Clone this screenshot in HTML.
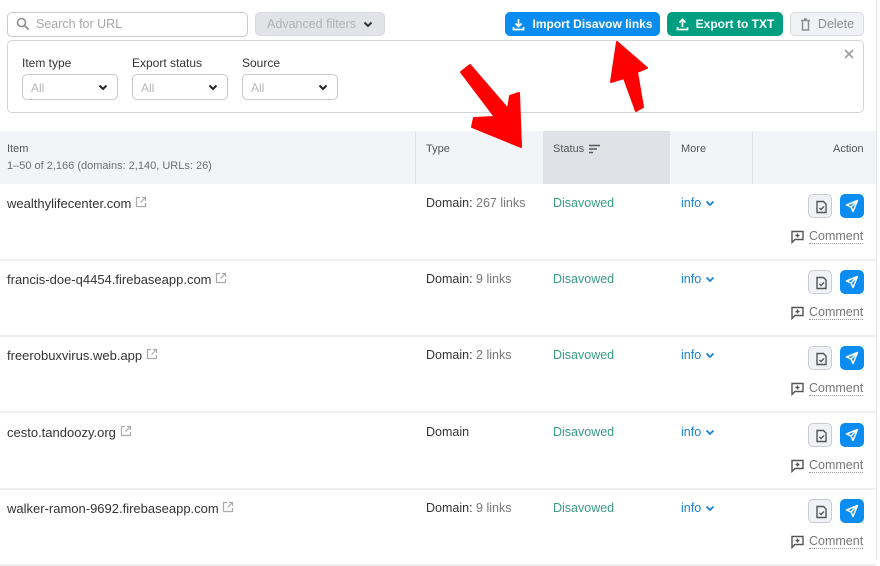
<!DOCTYPE html>
<html><head><meta charset="utf-8"><style>
*{box-sizing:border-box;margin:0;padding:0}
body{width:880px;height:560px;overflow:hidden;background:#fff;font-family:"Liberation Sans",sans-serif;color:#333;position:relative}
.a{position:absolute;white-space:nowrap}
.btn{position:absolute;height:24px;border-radius:5px;font-size:12.5px;display:flex;align-items:center;justify-content:center;gap:7px}
.sel{position:absolute;top:74px;width:96px;height:26px;border:1px solid #c8c9ce;border-radius:5px;font-size:12px;color:#b4b6bb;padding:6px 0 0 8px}
.sel svg{position:absolute;right:9px;top:9px}
.lbl{position:absolute;top:56px;font-size:12px;color:#333}
.row{position:absolute;left:0;width:876px;border-bottom:2px solid #efeff1;height:77px}
.c{position:absolute;top:12px;font-size:12.5px}
.it{font-size:13px}
.ic1{position:absolute;width:24px;height:24px;border:1px solid #c9cbd0;background:#f1f2f5;border-radius:5px}
.ic2{position:absolute;width:24px;height:24px;background:#0a8cf0;border-radius:5px}
.ic1 svg,.ic2 svg{position:absolute;left:5px;top:5px}
.cm{position:absolute;top:46px;left:791px;font-size:12.5px;color:#777;display:flex;align-items:center;gap:4px}
.cm span{border-bottom:1px dotted #999;line-height:13px}
</style></head><body>
<div class="a" style="left:7px;top:12px;width:241px;height:25px;border:1px solid #c8c9ce;border-radius:5px"></div>
<svg class="a" style="left:16px;top:17px" width="14" height="14" viewBox="0 0 14 14"><circle cx="5.5" cy="5.5" r="4" fill="none" stroke="#8a8d93" stroke-width="1.6"/><path d="M8.5 8.5L12.5 12.5" stroke="#8a8d93" stroke-width="1.8"/></svg>
<div class="a" style="left:36px;top:17px;font-size:12.5px;color:#a5a7ad">Search for URL</div>
<div class="btn" style="left:255px;top:12px;width:130px;background:#e2e3e7;color:#b0b2b8;border:1px solid #d8d9dd">Advanced filters <svg width="10" height="7" viewBox="0 0 10 7"><path d="M1.5 1.5L5 5L8.5 1.5" fill="none" stroke="#333" stroke-width="2"/></svg></div>
<div class="btn" style="left:505px;top:12px;width:155px;background:#0a8cf0;color:#fff;font-weight:bold;font-size:12px"><svg width="13" height="13" viewBox="0 0 13 13"><path d="M6.5 1V8M3.5 5.5L6.5 8.5L9.5 5.5M1.5 9V11.5H11.5V9" fill="none" stroke="#fff" stroke-width="1.7"/></svg>Import Disavow links</div>
<div class="btn" style="left:667px;top:12px;width:116px;background:#009f81;color:#fff;font-weight:bold;font-size:12px"><svg width="13" height="13" viewBox="0 0 13 13"><path d="M6.5 9V2M3.5 4.5L6.5 1.5L9.5 4.5M1.5 9V11.5H11.5V9" fill="none" stroke="#fff" stroke-width="1.7"/></svg>Export to TXT</div>
<div class="btn" style="left:790px;top:12px;width:74px;background:#f1f2f5;color:#8a8d93;border:1px solid #d8d9dd"><svg width="11" height="13" viewBox="0 0 11 13"><path d="M1 2.5H10M4 1H7M2.5 2.5V12H8.5V2.5" fill="none" stroke="#8a8d93" stroke-width="1.5"/></svg>Delete</div>
<div class="a" style="left:7px;top:40px;width:857px;height:73px;border:1px solid #d3d4d8;border-radius:5px"></div>
<svg class="a" style="left:844px;top:49px" width="10" height="10" viewBox="0 0 10 10"><path d="M1 1L9 9M9 1L1 9" stroke="#9a9ca2" stroke-width="1.6"/></svg>
<div class="lbl" style="left:22px">Item type</div>
<div class="lbl" style="left:132px">Export status</div>
<div class="lbl" style="left:242px">Source</div>
<div class="sel" style="left:22px">All<svg width="10" height="7" viewBox="0 0 10 7"><path d="M1.5 1.5L5 5L8.5 1.5" fill="none" stroke="#222" stroke-width="2"/></svg></div>
<div class="sel" style="left:132px">All<svg width="10" height="7" viewBox="0 0 10 7"><path d="M1.5 1.5L5 5L8.5 1.5" fill="none" stroke="#222" stroke-width="2"/></svg></div>
<div class="sel" style="left:242px">All<svg width="10" height="7" viewBox="0 0 10 7"><path d="M1.5 1.5L5 5L8.5 1.5" fill="none" stroke="#222" stroke-width="2"/></svg></div>
<div class="a" style="left:0;top:131px;width:876px;height:53px;background:#f3f4f7"></div>
<div class="a" style="left:543px;top:131px;width:127px;height:53px;background:#e1e2e8"></div>
<div class="a" style="left:415px;top:131px;width:1px;height:53px;background:#e1e2e6"></div>
<div class="a" style="left:752px;top:131px;width:1px;height:53px;background:#e1e2e6"></div>
<div class="a" style="left:876px;top:0;width:1px;height:560px;background:#e4e5e8"></div>
<div class="a" style="left:7px;top:143px;font-size:11px;color:#555">Item</div>
<div class="a" style="left:7px;top:160px;font-size:11px;color:#6c6e74">1–50 of 2,166 (domains: 2,140, URLs: 26)</div>
<div class="a" style="left:426px;top:143px;font-size:11px;color:#555">Type</div>
<div class="a" style="left:553px;top:143px;font-size:11px;color:#555">Status</div>
<svg class="a" style="left:589px;top:144px" width="12" height="10" viewBox="0 0 12 10"><path d="M0 1.5H11M0 5H8M0 8.5H4" stroke="#555" stroke-width="1.4"/></svg>
<div class="a" style="left:681px;top:143px;font-size:11px;color:#555">More</div>
<div class="a" style="left:833px;top:143px;font-size:11px;color:#555">Action</div>

<svg width="0" height="0" style="position:absolute"><defs>
<g id="ext"><path d="M5 1.5H1.5V10.5H10.5V7M7 1.5H10.5V5M10.5 1.5L5.5 6.5" fill="none" stroke="#aaa" stroke-width="1.2"/></g>
<g id="chev"><path d="M1.5 1.5L5 5L8.5 1.5" fill="none" stroke="#1a82d6" stroke-width="1.8"/></g>
<g id="doc"><path d="M3 1.5H9.5L12 4V12.5H3Z" fill="none" stroke="#555" stroke-width="1.4"/><path d="M5.5 8L7 9.5L10 6.5" fill="none" stroke="#555" stroke-width="1.4"/></g>
<g id="send"><path d="M12.5 1.5L1.5 6L6 8L8 12.5Z M6 8L12.5 1.5" fill="none" stroke="#fff" stroke-width="1.5" stroke-linejoin="round"/></g>
<g id="cmt"><path d="M1 1.5H12V9.5H4L1 12.5Z" fill="none" stroke="#555" stroke-width="1.4"/><path d="M6.5 3.5V7.5M4.5 5.5H8.5" stroke="#555" stroke-width="1.4"/></g>
</defs></svg>

<div class="row" style="top:184px"><div class="c it" style="left:7px">wealthylifecenter.com <svg width="12" height="12"><use href="#ext"/></svg></div><div class="c" style="left:426px">Domain: <span style="color:#777">267 links</span></div><div class="c" style="left:553px;color:#3a9a83">Disavowed</div><div class="c" style="left:681px;color:#1a82d6">info <svg width="10" height="7"><use href="#chev"/></svg></div><div class="ic1" style="left:808px;top:10px"><svg width="14" height="14"><use href="#doc"/></svg></div><div class="ic2" style="left:840px;top:10px"><svg width="14" height="14"><use href="#send"/></svg></div><div class="cm"><svg width="14" height="14"><use href="#cmt"/></svg><span>Comment</span></div></div>
<div class="row" style="top:260px"><div class="c it" style="left:7px">francis-doe-q4454.firebaseapp.com <svg width="12" height="12"><use href="#ext"/></svg></div><div class="c" style="left:426px">Domain: <span style="color:#777">9 links</span></div><div class="c" style="left:553px;color:#3a9a83">Disavowed</div><div class="c" style="left:681px;color:#1a82d6">info <svg width="10" height="7"><use href="#chev"/></svg></div><div class="ic1" style="left:808px;top:10px"><svg width="14" height="14"><use href="#doc"/></svg></div><div class="ic2" style="left:840px;top:10px"><svg width="14" height="14"><use href="#send"/></svg></div><div class="cm"><svg width="14" height="14"><use href="#cmt"/></svg><span>Comment</span></div></div>
<div class="row" style="top:336px"><div class="c it" style="left:7px">freerobuxvirus.web.app <svg width="12" height="12"><use href="#ext"/></svg></div><div class="c" style="left:426px">Domain: <span style="color:#777">2 links</span></div><div class="c" style="left:553px;color:#3a9a83">Disavowed</div><div class="c" style="left:681px;color:#1a82d6">info <svg width="10" height="7"><use href="#chev"/></svg></div><div class="ic1" style="left:808px;top:10px"><svg width="14" height="14"><use href="#doc"/></svg></div><div class="ic2" style="left:840px;top:10px"><svg width="14" height="14"><use href="#send"/></svg></div><div class="cm"><svg width="14" height="14"><use href="#cmt"/></svg><span>Comment</span></div></div>
<div class="row" style="top:413px"><div class="c it" style="left:7px">cesto.tandoozy.org <svg width="12" height="12"><use href="#ext"/></svg></div><div class="c" style="left:426px">Domain</div><div class="c" style="left:553px;color:#3a9a83">Disavowed</div><div class="c" style="left:681px;color:#1a82d6">info <svg width="10" height="7"><use href="#chev"/></svg></div><div class="ic1" style="left:808px;top:10px"><svg width="14" height="14"><use href="#doc"/></svg></div><div class="ic2" style="left:840px;top:10px"><svg width="14" height="14"><use href="#send"/></svg></div><div class="cm"><svg width="14" height="14"><use href="#cmt"/></svg><span>Comment</span></div></div>
<div class="row" style="top:489px"><div class="c it" style="left:7px">walker-ramon-9692.firebaseapp.com <svg width="12" height="12"><use href="#ext"/></svg></div><div class="c" style="left:426px">Domain: <span style="color:#777">9 links</span></div><div class="c" style="left:553px;color:#3a9a83">Disavowed</div><div class="c" style="left:681px;color:#1a82d6">info <svg width="10" height="7"><use href="#chev"/></svg></div><div class="ic1" style="left:808px;top:10px"><svg width="14" height="14"><use href="#doc"/></svg></div><div class="ic2" style="left:840px;top:10px"><svg width="14" height="14"><use href="#send"/></svg></div><div class="cm"><svg width="14" height="14"><use href="#cmt"/></svg><span>Comment</span></div></div>

<svg class="a" style="left:0;top:0" width="880" height="560">
<polygon points="461,72 470,65 508,109 510,96 519,93 521,147 472,127 474,118 495,117" fill="#f00" stroke="#f00" stroke-width="2" stroke-linejoin="round"/>
<polygon points="617,42 647,68 637,72 643,107 636,111 624,78 611,82" fill="#f00" stroke="#f00" stroke-width="2" stroke-linejoin="round"/>
</svg>
</body></html>
